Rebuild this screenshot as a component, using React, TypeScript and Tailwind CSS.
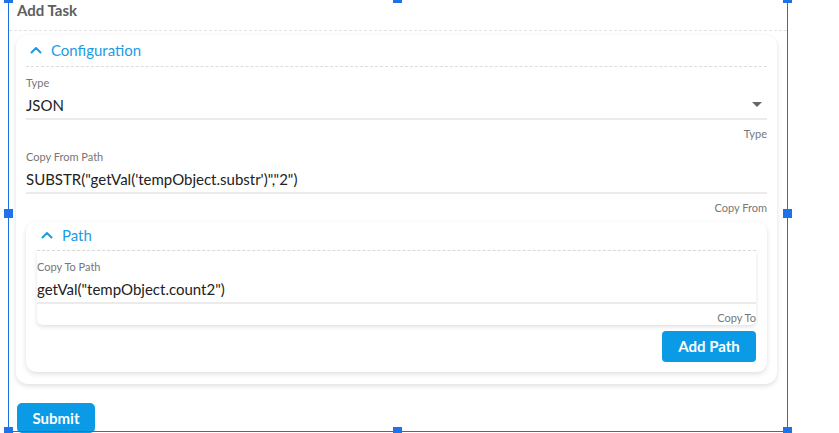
const FONT = { fontFamily: "Lato, 'Open Sans', sans-serif" };

function Chevron() {
	return (
		<svg width="12" height="8" viewBox="0 0 12 8" className="text-[#1b9ce5]">
			<polyline
				points="1.5,6.5 6,2 10.5,6.5"
				fill="none"
				stroke="currentColor"
				strokeWidth="2"
				strokeLinecap="round"
				strokeLinejoin="round"
			/>
		</svg>
	);
}

function SectionHeader({ title, className }: { title: string; className: string }) {
	return (
		<div
			className={`flex items-start gap-[9px] border-b border-dashed border-[#dcdcdc] pl-[4px] ${className}`}
		>
			<div className="flex h-[20px] items-center">
				<Chevron />
			</div>
			<span className="text-[15px] leading-[20px] text-[#1b9ce5]">{title}</span>
		</div>
	);
}

function Field({
	label,
	value,
	helper,
	select,
}: {
	label: string;
	value: string;
	helper: string;
	select?: boolean;
}) {
	return (
		<div className="pt-[9px]">
			<p className="text-[11px] leading-[14px] text-[#767676]">{label}</p>
			<div className="mt-[5px] flex h-[25px] items-start justify-between border-b-2 border-[#ebebeb]">
				<p className="text-[15px] leading-[20px] text-[#222]">{value}</p>
				{select ? (
					<div className="mt-[7px] mr-[5px] h-0 w-0 border-x-[5px] border-t-[5px] border-x-transparent border-t-[#666]" />
				) : null}
			</div>
			<p className="mt-[7px] text-right text-[11px] leading-[14px] text-[#777]">
				{helper}
			</p>
		</div>
	);
}

export default function App() {
	return (
		<div
			className="relative h-[433px] w-[839px] overflow-hidden bg-white"
			style={FONT}
		>
			<div className="ml-[9px] w-[778px]">
				<div className="h-[31px] border-b border-dashed border-[#e2e2e2] pl-[8px]">
					<p className="text-[15px] leading-[20px] font-bold text-[#5e5e5e]">
						Add Task
					</p>
				</div>

				<section className="mt-[4px] ml-[7px] w-[761px] rounded-[12px] px-[10px] pb-[12px] shadow-[0_2px_5px_rgba(0,0,0,0.13)]">
					<SectionHeader title="Configuration" className="h-[32px] pt-[5px]" />
					<Field label="Type" value="JSON" helper="Type" select />
					<Field
						label="Copy From Path"
						value={`SUBSTR("getVal('tempObject.substr')","2")`}
						helper="Copy From"
					/>

					<div className="mt-[7px] rounded-[10px] px-[11px] pb-[10px] shadow-[0_2px_5px_rgba(0,0,0,0.13)]">
						<SectionHeader title="Path" className="h-[29px] pt-[3px]" />
						<div className="rounded-b-[6px] shadow-[0_2px_4px_rgba(0,0,0,0.12)]">
							<Field
								label="Copy To Path"
								value={`getVal("tempObject.count2")`}
								helper="Copy To"
							/>
						</div>
						<div className="mt-[6px] flex justify-end">
							<button
								type="button"
								className="h-[31px] w-[94px] rounded-[4px] bg-[#0a9ae6] text-[15px] font-bold text-white"
							>
								Add Path
							</button>
						</div>
					</div>
				</section>

				<button
					type="button"
					className="mt-[19px] ml-[8px] h-[30px] w-[78px] rounded-[5px] bg-[#0a9ae6] text-[15px] font-bold text-white"
				>
					Submit
				</button>
			</div>

			{/* selection overlay */}
			<div className="absolute top-0 left-[8px] h-[432px] w-px bg-[#1f6fe0]" />
			<div className="absolute top-0 left-[787px] h-[432px] w-px bg-[#1f6fe0]" />
			<div className="absolute top-[431px] left-[8px] h-px w-[780px] bg-[#1f6fe0]" />
			<div className="absolute -top-[6px] left-[4px] h-[9px] w-[9px] bg-[#1f73e8]" />
			<div className="absolute -top-[6px] left-[393px] h-[9px] w-[9px] bg-[#1f73e8]" />
			<div className="absolute -top-[6px] left-[783px] h-[9px] w-[9px] bg-[#1f73e8]" />
			<div className="absolute top-[209px] left-[4px] h-[9px] w-[9px] bg-[#1f73e8]" />
			<div className="absolute top-[209px] left-[783px] h-[9px] w-[9px] bg-[#1f73e8]" />
			<div className="absolute top-[427px] left-[4px] h-[9px] w-[9px] bg-[#1f73e8]" />
			<div className="absolute top-[427px] left-[393px] h-[9px] w-[9px] bg-[#1f73e8]" />
			<div className="absolute top-[427px] left-[783px] h-[9px] w-[9px] bg-[#1f73e8]" />
		</div>
	);
}
